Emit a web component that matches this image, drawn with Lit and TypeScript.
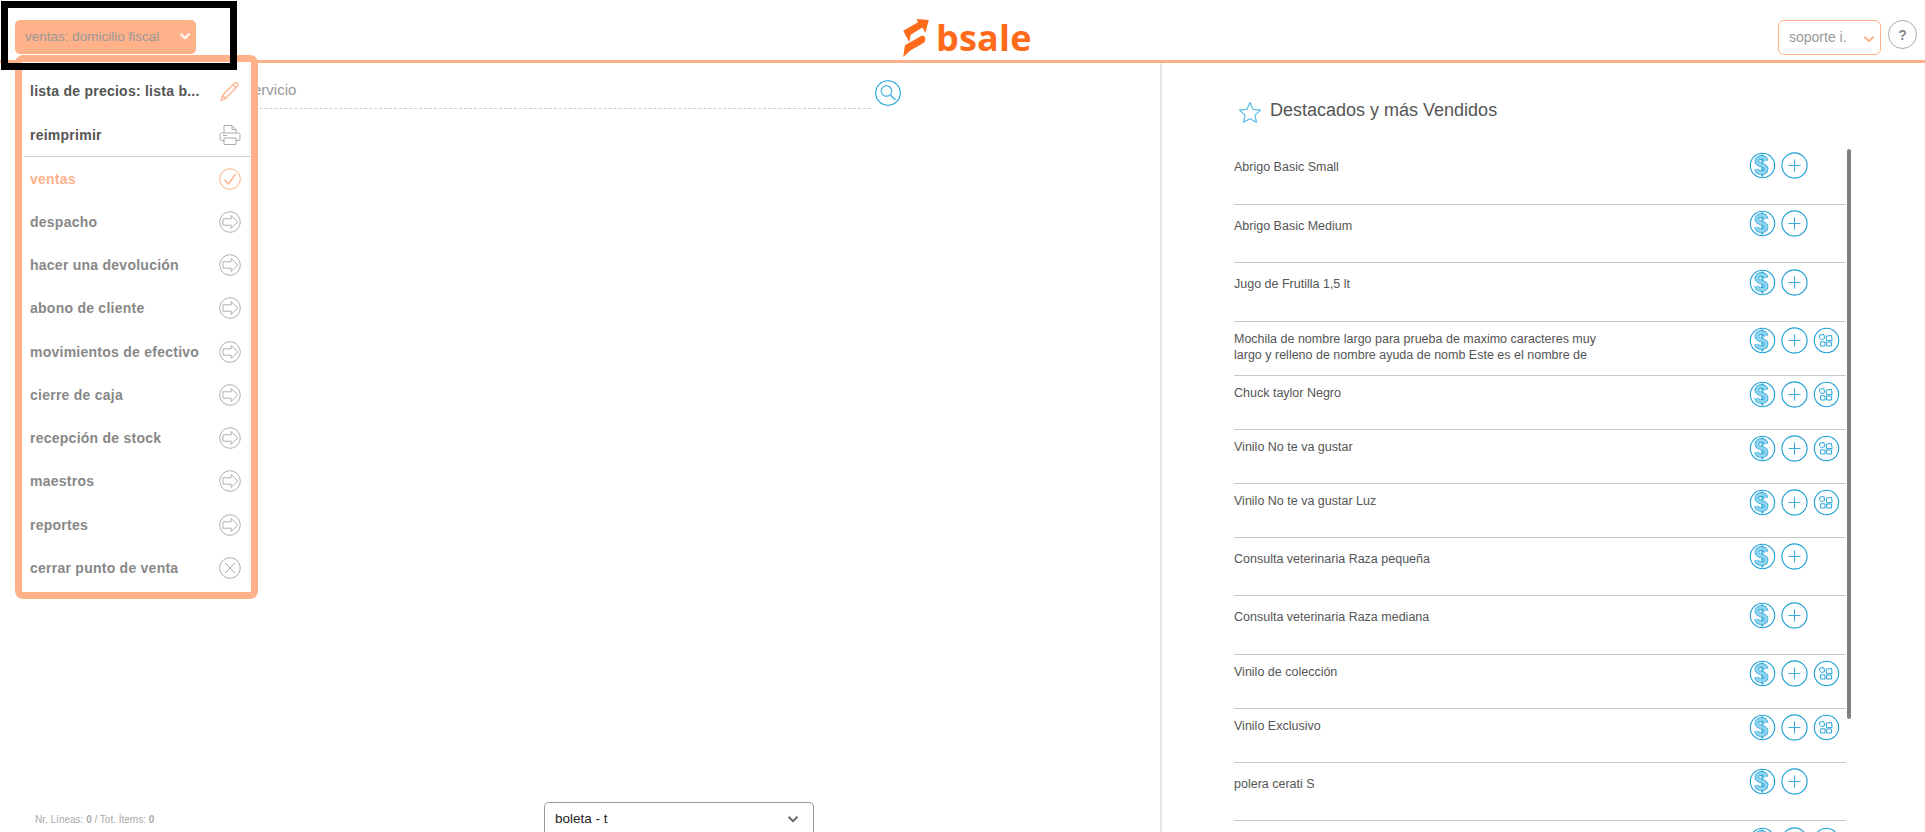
import { LitElement, html, css } from "lit";
import { customElement } from "lit/decorators.js";

const chevron = (c: string, w = 12) => html`<svg class="chev" width=${w} height=${w * 0.7} viewBox="0 0 12 8"><path d="M1.5 1.5 6 6l4.5-4.5" fill="none" stroke=${c} stroke-width="2"/></svg>`;

const arrowIcon = html`<svg class="mi" viewBox="0 0 22 22"><circle cx="11" cy="11" r="10.3" fill="none" stroke="#b0b0b0" stroke-width="1"/><path d="M4 7.8h8.2V4.6L18.8 11l-6.6 6.4v-3.2H4z" fill="none" stroke="#b0b0b0" stroke-width="1"/></svg>`;
const closeIcon = html`<svg class="mi" viewBox="0 0 22 22"><circle cx="11" cy="11" r="10.3" fill="none" stroke="#b0b0b0" stroke-width="1"/><path d="M6 6l10 10M16 6 6 16" fill="none" stroke="#a8a8a8" stroke-width="1"/></svg>`;
const checkIcon = html`<svg class="mi" viewBox="0 0 22 22"><circle cx="11" cy="11" r="10.3" fill="none" stroke="#ffb18a" stroke-width="1"/><path d="M5.5 11.5l4 4.5L16.5 6" fill="none" stroke="#ffb18a" stroke-width="1.4"/></svg>`;
const pencilIcon = html`<svg class="mi" viewBox="0 0 22 22"><path d="M3.5 15.5 15.5 3a2.2 2.2 0 0 1 3.2 3L6.5 18.5 2 20.5z M14 5l3.5 3.2 M3.5 15.5l3 3" fill="none" stroke="#ffb18a" stroke-width="1.2" stroke-linejoin="round"/></svg>`;
const printIcon = html`<svg class="mi" viewBox="0 0 22 22"><path d="M5 9V1.5h8l4 4V9 M13 1.5v4h4" fill="none" stroke="#aaa" stroke-width="1"/><path d="M5 16.5H2.5a1.5 1.5 0 0 1-1.5-1.5v-4.5A1.5 1.5 0 0 1 2.5 9h17a1.5 1.5 0 0 1 1.5 1.5V15a1.5 1.5 0 0 1-1.5 1.5H17" fill="none" stroke="#aaa" stroke-width="1"/><path d="M5 14h12v5.5a1 1 0 0 1-1 1H6a1 1 0 0 1-1-1z M4 11.5h4" fill="none" stroke="#aaa" stroke-width="1"/></svg>`;

const sPath = "M17.2 8.8c-.6-2.2-2.6-3.3-4.7-3.3-2.7 0-4.7 1.4-4.7 3.7 0 5 9.4 2.8 9.4 7.8 0 2.3-2.1 3.6-4.7 3.6-2.6 0-4.6-1.2-5.1-3.5";
const dollarIcon = html`<svg class="ri" viewBox="0 0 27 27"><circle cx="13.5" cy="13.5" r="12.2" fill="#fff" stroke="#1a9fd6" stroke-width="1.1"/><path d="M12.5 2.8h1.6v21.4h-1.6z" fill="#7fcdec" stroke="#1a9fd6" stroke-width=".6"/><path d=${sPath} fill="none" stroke="#1a9fd6" stroke-width="4.4"/><path d=${sPath} fill="none" stroke="#8ed4ef" stroke-width="3.2"/></svg>`;
const plusIcon = html`<svg class="ri" viewBox="0 0 27 27"><circle cx="13.5" cy="13.5" r="12.6" fill="none" stroke="#1a9fd6" stroke-width="1.1"/><path d="M13.5 7.5v12M7.5 13.5h12" stroke="#3aaedc" stroke-width="1.1" fill="none"/></svg>`;
const comboIcon = html`<svg class="ri" viewBox="0 0 27 27"><circle cx="13.5" cy="13.5" r="12.2" fill="none" stroke="#1a9fd6" stroke-width="1.1"/><path d="M6.6 8.2l4.2-.8.9 4.2-3.2 1-1.9-1.6zM13.2 9.2l5.3-.8.6 5.1-5.5.3zM7.6 14.8h4.4v4.2H7.6zM13.6 15h5v4h-5z" fill="none" stroke="#2ba6da" stroke-width="1"/></svg>`;

const menu = [
  { t: "lista de precios: lista b...", i: pencilIcon, c: "dark" },
  { t: "reimprimir", i: printIcon, c: "dark sep" },
  { t: "ventas", i: checkIcon, c: "on" },
  { t: "despacho", i: arrowIcon, c: "" },
  { t: "hacer una devolución", i: arrowIcon, c: "" },
  { t: "abono de cliente", i: arrowIcon, c: "" },
  { t: "movimientos de efectivo", i: arrowIcon, c: "" },
  { t: "cierre de caja", i: arrowIcon, c: "" },
  { t: "recepción de stock", i: arrowIcon, c: "" },
  { t: "maestros", i: arrowIcon, c: "" },
  { t: "reportes", i: arrowIcon, c: "" },
  { t: "cerrar punto de venta", i: closeIcon, c: "" },
];

const rows = [
  { t: ["Abrigo Basic Small"], combo: false },
  { t: ["Abrigo Basic Medium"], combo: false },
  { t: ["Jugo de Frutilla 1,5 lt"], combo: false },
  { t: ["Mochila de nombre largo para prueba de maximo caracteres muy", "largo y relleno de nombre ayuda de nomb Este es el nombre de"], combo: true },
  { t: ["Chuck taylor Negro"], combo: true },
  { t: ["Vinilo No te va gustar"], combo: true },
  { t: ["Vinilo No te va gustar Luz"], combo: true },
  { t: ["Consulta veterinaria Raza pequeña"], combo: false },
  { t: ["Consulta veterinaria Raza mediana"], combo: false },
  { t: ["Vinilo de colección"], combo: true },
  { t: ["Vinilo Exclusivo"], combo: true },
  { t: ["polera cerati S"], combo: false },
  { t: [""], combo: true },
];

@customElement("app-root")
export class AppRoot extends LitElement {
  static styles = css`
    :host { display: block; width: 100vw; height: 100vh; overflow: hidden; position: relative; background: #fff; font-family: "Liberation Sans", Arial, sans-serif; color: #555; }
    .top { height: 60px; border-bottom: 3px solid #ffb18a; display: flex; align-items: flex-start; position: relative; }
    .drop { margin: 20px 0 0 15px; width: 181px; height: 34px; box-sizing: border-box; background: #ffb18a; border-radius: 5px; color: #999; font-size: 13.5px; display: flex; align-items: center; justify-content: space-between; padding: 0 5px 2px 10px; }
    .logo { position: absolute; left: 903px; top: 19px; display: flex; align-items: flex-start; gap: 7px; }
    .logo svg { display: block; }
    .word { font-family: "Open Sans", sans-serif; font-weight: 700; font-size: 36px; line-height: 38px; color: #ff6b1a; letter-spacing: .2px; }
    .right { margin-left: auto; display: flex; align-items: flex-start; gap: 7px; padding: 20px 8px 0 0; }
    .sel { width: 103px; height: 35px; box-sizing: border-box; border: 1px solid #ffb18a; border-radius: 6px; color: #999; font-size: 14px; display: flex; align-items: center; justify-content: space-between; padding: 0 5px 2px 10px; }
    .sel .chev { margin-top: 5px; }
    .help { width: 29px; height: 29px; box-sizing: border-box; border: 1px solid #aaa; border-radius: 50%; display: flex; align-items: center; justify-content: center; color: #888; font-weight: bold; font-size: 14px; }
    .body { display: grid; grid-template-columns: 1162px 1fr; height: 769px; }
    .left { border-right: 2px solid #e8e8e8; display: flex; flex-direction: column; }
    .search { display: flex; align-items: center; margin-top: 13px; padding-right: 259px; gap: 4px; padding-left: 60px; }
    .input { flex: 1; height: 33px; box-sizing: border-box; border-bottom: 1px dashed #ccc; font-size: 15px; color: #999; line-height: 28px; padding-left: 173px; }
    .spacer { flex: 1; }
    .foot { display: flex; align-items: flex-start; height: 30px; }
    .count { margin: 12px 0 0 35px; width: 509px; font-size: 10px; color: #aaa; }
    .count b { font-weight: bold; }
    .doc { width: 270px; height: 40px; box-sizing: border-box; border: 1px solid #999; border-bottom: 0; border-radius: 5px 5px 0 0; color: #222; font-size: 13.5px; display: flex; justify-content: space-between; padding: 8px 14px 0 10px; }
    .doc .chev { margin-top: 4px; }
    .side { position: relative; overflow: hidden; }
    .title { display: flex; align-items: center; gap: 8px; margin: 35px 0 0 76px; height: 24px; font-size: 18px; color: #555; }
    .title svg { margin-top: 4px; }
    .list { margin: 24px 0 0 72px; width: 612px; }
    .row { height: 58.5px; box-sizing: border-box; border-bottom: 1px solid #c8c8c8; display: flex; justify-content: space-between; padding: 13px 0 0; font-size: 12.5px; line-height: 16px; color: #555; position: relative; }
    .row.short { height: 54px; padding-top: 9px; }
    .row .line { white-space: nowrap; }
    .acts { position: absolute; left: 515px; top: 5.5px; display: flex; gap: 5px; }
    .ri { width: 27px; height: 27px; display: block; }
    .bar { position: absolute; left: 685px; top: 86px; width: 4px; height: 570px; border-radius: 2px; background: #808080; }
    .menu { position: absolute; left: 15px; top: 55px; width: 243px; height: 544px; box-sizing: border-box; border: 7px solid #ffb18a; border-radius: 8px; background: #fff; padding: 7px 0 0 8px; }
    .mrow { height: 43.25px; display: flex; align-items: center; justify-content: space-between; padding-right: 10px; font-size: 14px; font-weight: bold; color: #888; letter-spacing: .25px; box-sizing: border-box; }
    .mrow.dark { height: 44px; color: #555; }
    .mrow.on { color: #ffb18a; }
    .mrow.sep { position: relative; }
    .mrow.sep::after { content: ""; position: absolute; left: -6px; right: 1px; bottom: 0; border-bottom: 1px solid #ccc; }
    .mi { width: 22px; height: 22px; display: block; flex: none; }
    .frame { position: absolute; left: 1px; top: 1px; width: 236px; height: 69px; box-sizing: border-box; border: 7px solid #000; pointer-events: none; }
  `;

  render() {
    return html`
      <div class="top">
        <div class="drop"><span>ventas: domicilio fiscal</span>${chevron("#fff")}</div>
        <div class="logo">
          <svg width="26" height="38" viewBox="160 57 76 113"><path d="M160 92 204 67 200 57 236 60 226 98 217 82 182 104 178 126Z" fill="#ff6b1a"/><path d="M165 135 215 107Q225 104 226 118 226 125 218 130L182 150 160 170Z" fill="#ff6b1a"/></svg>
          <span class="word">bsale</span>
        </div>
        <div class="right">
          <div class="sel"><span>soporte i.</span>${chevron("#ffb18a")}</div>
          <div class="help">?</div>
        </div>
      </div>
      <div class="body">
        <div class="left">
          <div class="search">
            <div class="input">o servicio</div>
            <svg width="26" height="26" viewBox="0 0 26 26"><circle cx="13" cy="13" r="12.3" fill="none" stroke="#1a9fd6" stroke-width="1.1"/><circle cx="11.5" cy="11" r="5.2" fill="none" stroke="#5cbde3" stroke-width="1.4"/><path d="M15.3 14.8l5.2 5" stroke="#5cbde3" stroke-width="1.6" fill="none"/></svg>
          </div>
          <div class="spacer"></div>
          <div class="foot">
            <div class="count">Nr. Líneas: <b>0</b> / Tot. Ítems: <b>0</b></div>
            <div class="doc"><span>boleta - t</span>${chevron("#666")}</div>
          </div>
        </div>
        <div class="side">
          <div class="title"><svg width="24" height="22" viewBox="0 0 24 22"><path d="M12 1.5l3 6.8 7.5.8-5.6 5 1.6 7.2L12 17.8l-6.5 3.5 1.6-7.2-5.6-5 7.5-.8z" fill="none" stroke="#55bde6" stroke-width="1.2" stroke-linejoin="round"/></svg><span>Destacados y más Vendidos</span></div>
          <div class="list">
            ${rows.map((r) => html`<div class="row ${r.combo ? "short" : ""}">
              <div>${r.t.map((l) => html`<div class="line">${l}</div>`)}</div>
              <div class="acts">${dollarIcon}${plusIcon}${r.combo ? comboIcon : ""}</div>
            </div>`)}
          </div>
          <div class="bar"></div>
        </div>
      </div>
      <div class="menu">
        ${menu.map((m) => html`<div class="mrow ${m.c}"><span>${m.t}</span>${m.i}</div>`)}
      </div>
      <div class="frame"></div>
    `;
  }
}
